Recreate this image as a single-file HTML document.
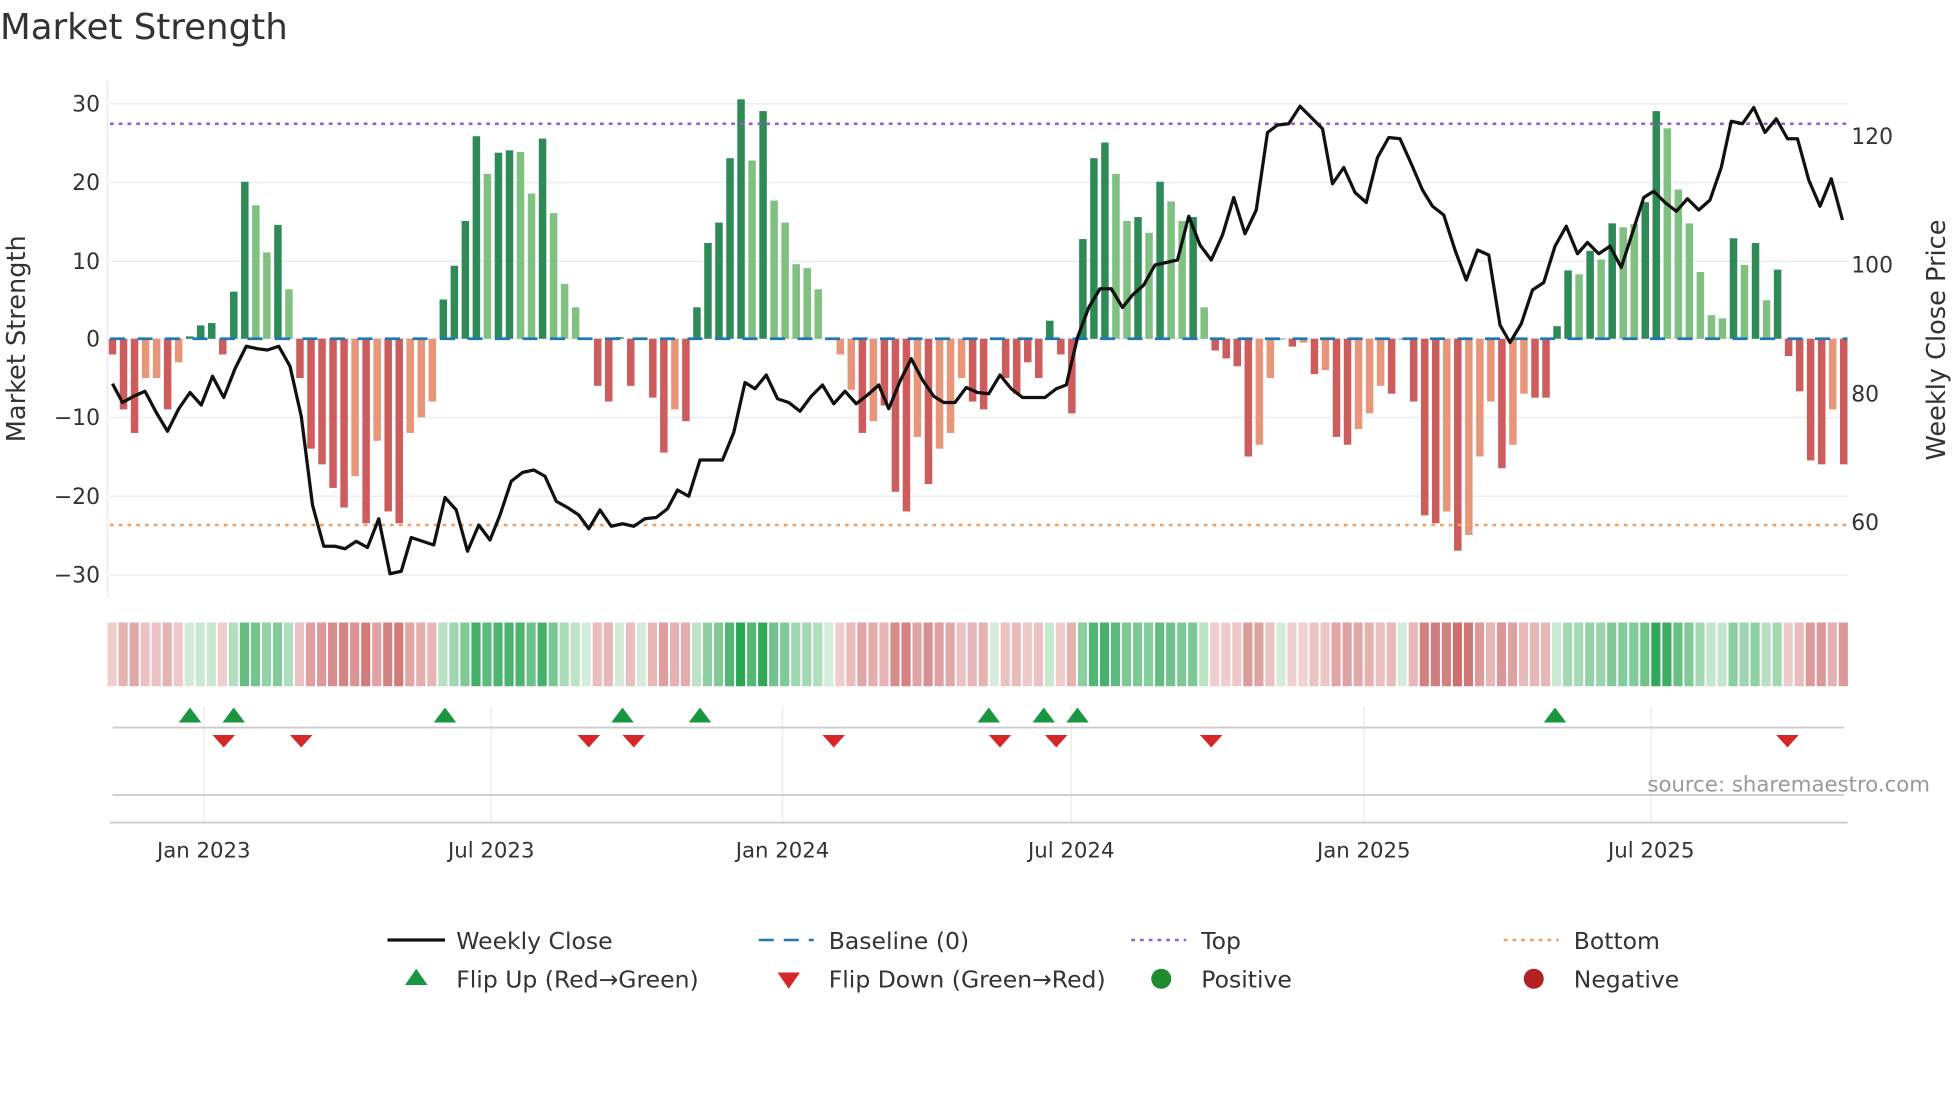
<!DOCTYPE html>
<html><head><meta charset="utf-8"><style>
html,body{margin:0;padding:0;background:#fff;overflow:hidden}
#wrap{width:1568px;height:882px;transform:scale(1.25);transform-origin:0 0;position:relative}
svg text{font-family:"DejaVu Sans","Liberation Sans",sans-serif;fill:#333}
</style></head><body><div id="wrap">
<svg id="s" width="1568" height="882" xmlns="http://www.w3.org/2000/svg">
<text x="0" y="31" font-size="28.5">Market Strength</text>
<g id="grid"></g><g id="bars"></g><g id="heat"></g><g id="marks"></g>
<line x1="88" y1="99" x2="1478" y2="99" stroke="#9b59d6" stroke-width="2" stroke-dasharray="3,4"/>
<line x1="88" y1="420" x2="1478" y2="420" stroke="#f0a060" stroke-width="2" stroke-dasharray="3,4"/>
<line x1="88" y1="271" x2="1478" y2="271" stroke="#1f77b4" stroke-width="2.2" stroke-dasharray="12,10"/>
<polyline id="price" fill="none" stroke="#111" stroke-width="2.6" stroke-linejoin="round"/>
<g font-size="17.5" text-anchor="end">
<text x="80" y="89">30</text><text x="80" y="152">20</text><text x="80" y="215">10</text><text x="80" y="277">0</text><text x="80" y="340">−10</text><text x="80" y="403">−20</text><text x="80" y="466">−30</text></g>
<g font-size="17.5"><text x="1481" y="115">120</text><text x="1481" y="218">100</text><text x="1481" y="321">80</text><text x="1481" y="424">60</text></g>
<text transform="translate(20,271) rotate(-90)" font-size="20.5" text-anchor="middle">Market Strength</text>
<text transform="translate(1556,272) rotate(-90)" font-size="20.5" text-anchor="middle">Weekly Close Price</text>
<line x1="90" y1="582" x2="1475" y2="582" stroke="#ccc" stroke-width="1.5"/>
<line x1="90" y1="636" x2="1475" y2="636" stroke="#ccc" stroke-width="1.5"/>
<line x1="88" y1="658" x2="1478" y2="658" stroke="#ccc" stroke-width="1.5"/>
<text x="1544" y="633" font-size="17" text-anchor="end" style="fill:#999">source: sharemaestro.com</text>
<g font-size="17" text-anchor="middle"><text x="163" y="686">Jan 2023</text><text x="393" y="686">Jul 2023</text><text x="626" y="686">Jan 2024</text><text x="857" y="686">Jul 2024</text><text x="1091" y="686">Jan 2025</text><text x="1321" y="686">Jul 2025</text></g>
<g font-size="18.8">
<line x1="310" y1="752" x2="356" y2="752" stroke="#111" stroke-width="2.6"/><text x="365" y="759">Weekly Close</text>
<line x1="607" y1="752" x2="651" y2="752" stroke="#1f77b4" stroke-width="2" stroke-dasharray="12,8"/><text x="663" y="759">Baseline (0)</text>
<line x1="905" y1="752" x2="949" y2="752" stroke="#9b59d6" stroke-width="2" stroke-dasharray="3,4"/><text x="961" y="759">Top</text>
<line x1="1203" y1="752" x2="1247" y2="752" stroke="#f0a060" stroke-width="2" stroke-dasharray="3,4"/><text x="1259" y="759">Bottom</text>
<polygon points="324,788 342,788 333,775" fill="#1a9641"/><text x="365" y="790">Flip Up (Red→Green)</text>
<polygon points="622,778 640,778 631,791" fill="#d62728"/><text x="663" y="790">Flip Down (Green→Red)</text>
<circle cx="929" cy="783" r="8" fill="#1f8a2e"/><text x="961" y="790">Positive</text>
<circle cx="1227" cy="783" r="8" fill="#b22222"/><text x="1259" y="790">Negative</text>
</g>
</svg></div>
<script>
var NS="http://www.w3.org/2000/svg";
function el(p,t,a){var e=document.createElementNS(NS,t);for(var k in a)e.setAttribute(k,a[k]);document.getElementById(p).appendChild(e);return e;}
[83,146,209,271,334,397,460].forEach(function(y){el("grid","line",{x1:88,x2:1478,y1:y,y2:y,stroke:"#ebebf2","stroke-width":1.2});});
el("grid","line",{x1:86,x2:86,y1:65,y2:478,stroke:"#ebebf2","stroke-width":1.2});
[163,393,626,857,1091,1321].forEach(function(x){el("grid","line",{x1:x,x2:x,y1:565,y2:658,stroke:"#eee","stroke-width":1.2});});
var V="-2,-9,-12,-5L,-5L,-9,-3L,0.3,1.7,2,-2,6,20,17L,11L,14.5,6.3L,-5,-14,-16,-19,-21.5,-17.5L,-23.5,-13L,-22,-23.5,-12L,-10L,-8L,5,9.3,15,25.8,21L,23.7,24,23.8L,18.5L,25.5,16L,7L,4L,0,-6,-8,0.2,-6,0,-7.5,-14.5,-9L,-10.5,4,12.2,14.8,23,30.5,22.7L,29,17.6L,14.8L,9.5L,9L,6.3L,0,-2L,-6.5L,-12,-10.5L,-8.5,-19.5,-22,-12.5L,-18.5,-14L,-12L,-5L,-8,-9,0,-5,-7,-3,-5,2.3,-2,-9.5,12.7,23,25,21L,15L,15.5,13.5L,20,17.5L,15L,15.5,4L,-1.5,-2.5,-3.5,-15,-13.5L,-5L,0,-1,-0.5L,-4.5,-4L,-12.5,-13.5,-11.5L,-9.5L,-6L,-7,0,-8,-22.5,-23.5,-22L,-27,-25L,-15L,-8L,-16.5,-13.5L,-7L,-7.5,-7.5,1.6,8.7,8.2L,11.2,10.1L,14.7,14.2L,14.6L,17.4,29,26.8L,19L,14.7L,8.5L,3L,2.6L,12.8,9.4L,12.2,4.9L,8.8,-2.2,-6.7,-15.5,-16,-9L,-16".split(",");
var n=V.length,x0=90,step=(1475-90)/(n-1);
V.forEach(function(s,i){var L=s.indexOf("L")>=0,v=parseFloat(s),x=x0+i*step,h=Math.abs(v)*6.28;
 var c=v>=0?(L?"#80c080":"#2e8b57"):(L?"#e8967a":"#cd5c5c");
 el("bars","rect",{x:x-3,y:v>=0?271-h:271,width:6,height:Math.max(h,0.5),fill:c});
 var t=Math.min(Math.abs(v)/30,1),col;
 if(v>=0){col="rgb("+Math.round(212-170*t)+","+Math.round(236-70*t)+","+Math.round(217-132*t)+")";}
 else{col="rgb("+Math.round(242-42*t)+","+Math.round(212-112*t)+","+Math.round(212-112*t)+")";}
 el("heat","rect",{x:x-4,y:498,width:step-1.5,height:51,fill:col});
});
[152,187,356,498,560,791,835,862,1244].forEach(function(x){el("marks","polygon",{points:(x-9)+",578 "+(x+9)+",578 "+x+",566",fill:"#1a9641"});});
[179,241,471,507,667,800,845,969,1430].forEach(function(x){el("marks","polygon",{points:(x-9)+",588 "+(x+9)+",588 "+x+",598",fill:"#d62728"});});
document.getElementById("price").setAttribute("points","90,307 98,322 107,317 116,313 125,330 134,345 143,327 152,314 161,324 170,301 179,318 188,295 197,277 206,279 214,280 223,277 232,293 241,333 250,404 259,437 268,437 276,439 285,433 294,438 303,415 312,459 321,457 329,430 338,433 347,436 356,398 365,408 374,441 383,420 392,432 400,412 409,385 418,378 427,376 436,381 445,401 454,406 463,412 471,423 480,408 489,421 498,419 507,421 516,415 525,414 534,407 542,392 551,397 560,368 569,368 578,368 587,346 596,306 604,311 613,300 622,319 631,322 640,329 649,317 658,308 667,323 676,313 685,323 694,316 703,308 711,327 720,305 729,287 738,304 747,317 755,322 764,322 773,310 782,314 791,315 800,300 809,311 818,318 827,318 836,318 845,311 853,308 862,270 871,246 880,231 889,231 898,246 906,236 915,228 924,212 933,210 942,208 951,173 960,196 969,208 978,188 987,158 996,187 1005,168 1014,106 1022,100 1031,99 1040,85 1049,94 1058,103 1066,147 1075,134 1084,154 1093,162 1102,126 1111,110 1120,111 1129,131 1138,152 1146,165 1155,172 1164,200 1173,224 1182,200 1191,204 1200,260 1208,274 1217,259 1226,232 1235,226 1244,197 1253,181 1262,203 1270,194 1279,203 1288,197 1297,214 1306,186 1315,158 1323,153 1332,162 1341,169 1350,159 1359,168 1368,160 1377,134 1385,97 1394,99 1403,86 1412,106 1421,95 1430,111 1438,111 1447,144 1456,165 1465,143 1474,176");
</script>
</body></html>
